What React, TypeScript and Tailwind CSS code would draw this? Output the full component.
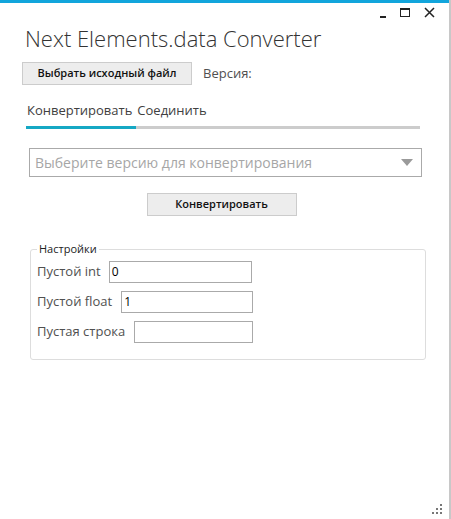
import React from 'react';

const font = {fontFamily: '"Open Sans", "Noto Sans", sans-serif'};

const Field = ({label, value, inputClass}: {label: string; value: string; inputClass: string}) => (
  <div className="flex h-[30px] items-center">
    <span className="text-[13px] text-[#505050]">{label}</span>
    <div className={`flex h-[22px] items-center border border-[#aaaaaa] bg-white px-[2px] text-[12px] text-black ${inputClass}`}>
      {value}
    </div>
  </div>
);

const App = () => {
  return (
    <div className="relative flex h-[519px] w-[451px] flex-col overflow-hidden border-r-2 border-[#c8c8c8] bg-white" style={font}>
      <div className="h-[3px] w-full bg-[#12a5dc]" />

      {/* window controls */}
      <div className="absolute right-[14px] top-[7px] flex items-center gap-[14px] text-[#222]">
        <div className="mt-[8px] h-[2px] w-[6px] bg-[#222]" />
        <div className="h-[9px] w-[10px] border border-t-2 border-[#222]" />
        <svg width="11" height="11" viewBox="0 0 11 11">
          <path d="M1 1 L10 10 M10 1 L1 10" stroke="#222" strokeWidth="1.5" />
        </svg>
      </div>

      <div className="pl-[25px] pt-[20px] text-[22px] font-light leading-[30px] text-[#333]">
        Next Elements.data Converter
      </div>

      <div className="ml-[22px] mt-[9px] flex items-center">
        <button className="h-[23px] w-[170px] border border-[#cccccc] bg-[#ededed] text-[11px] font-semibold text-[#111]">
          Выбрать исходный файл
        </button>
        <span className="ml-[11px] text-[13px] text-[#505050]">Версия:</span>
      </div>

      {/* tabs */}
      <div className="ml-[26px] mt-[15px] w-[394px]">
        <div className="flex gap-[5px] pl-[1px] text-[13px] leading-[20px] text-[#404040]">
          <span>Конвертировать</span>
          <span>Соединить</span>
        </div>
        <div className="mt-[6px] flex h-[3px]">
          <div className="w-[110px] bg-[#15a8c4]" />
          <div className="flex-1 bg-[#cccccc]" />
        </div>
      </div>

      <div className="ml-[29px] mt-[19px] flex h-[29px] w-[393px] items-center justify-between border border-[#aaaaaa] pl-[5px] pr-[8px]">
        <span className="text-[14px] text-[#a6a6a6]">Выберите версию для конвертирования</span>
        <svg width="12" height="7" viewBox="0 0 12 7">
          <path d="M0 0 H12 L6 7 Z" fill="#9a9a9a" />
        </svg>
      </div>

      <div className="mt-[16px] flex justify-center pr-[2px]">
        <button className="ml-[-4px] h-[23px] w-[150px] border border-[#cccccc] bg-[#ededed] text-[11px] font-semibold text-[#111]">
          Конвертировать
        </button>
      </div>

      {/* settings group */}
      <div className="relative ml-[30px] mt-[33px] h-[111px] w-[396px] rounded-[3px] border border-[#dddddd] pl-[6px] pt-[7px]">
        <span className="absolute left-[6px] top-[-8px] bg-white px-[2px] text-[11px] leading-[14px] text-[#222]">Настройки</span>
        <Field label="Пустой int" value="0" inputClass="ml-[8px] w-[143px]" />
        <Field label="Пустой float" value="1" inputClass="ml-[9px] w-[132px]" />
        <Field label="Пустая строка" value="" inputClass="ml-[9px] w-[119px]" />
      </div>

      {/* resize grip */}
      <div className="absolute bottom-[5px] right-[7px] grid grid-cols-3 gap-[2px]">
        <span className="h-[2px] w-[2px]" />
        <span className="h-[2px] w-[2px]" />
        <span className="h-[2px] w-[2px] bg-[#777]" />
        <span className="h-[2px] w-[2px]" />
        <span className="h-[2px] w-[2px] bg-[#777]" />
        <span className="h-[2px] w-[2px] bg-[#777]" />
        <span className="h-[2px] w-[2px] bg-[#777]" />
        <span className="h-[2px] w-[2px] bg-[#777]" />
        <span className="h-[2px] w-[2px] bg-[#777]" />
      </div>
    </div>
  );
};

export default App;
